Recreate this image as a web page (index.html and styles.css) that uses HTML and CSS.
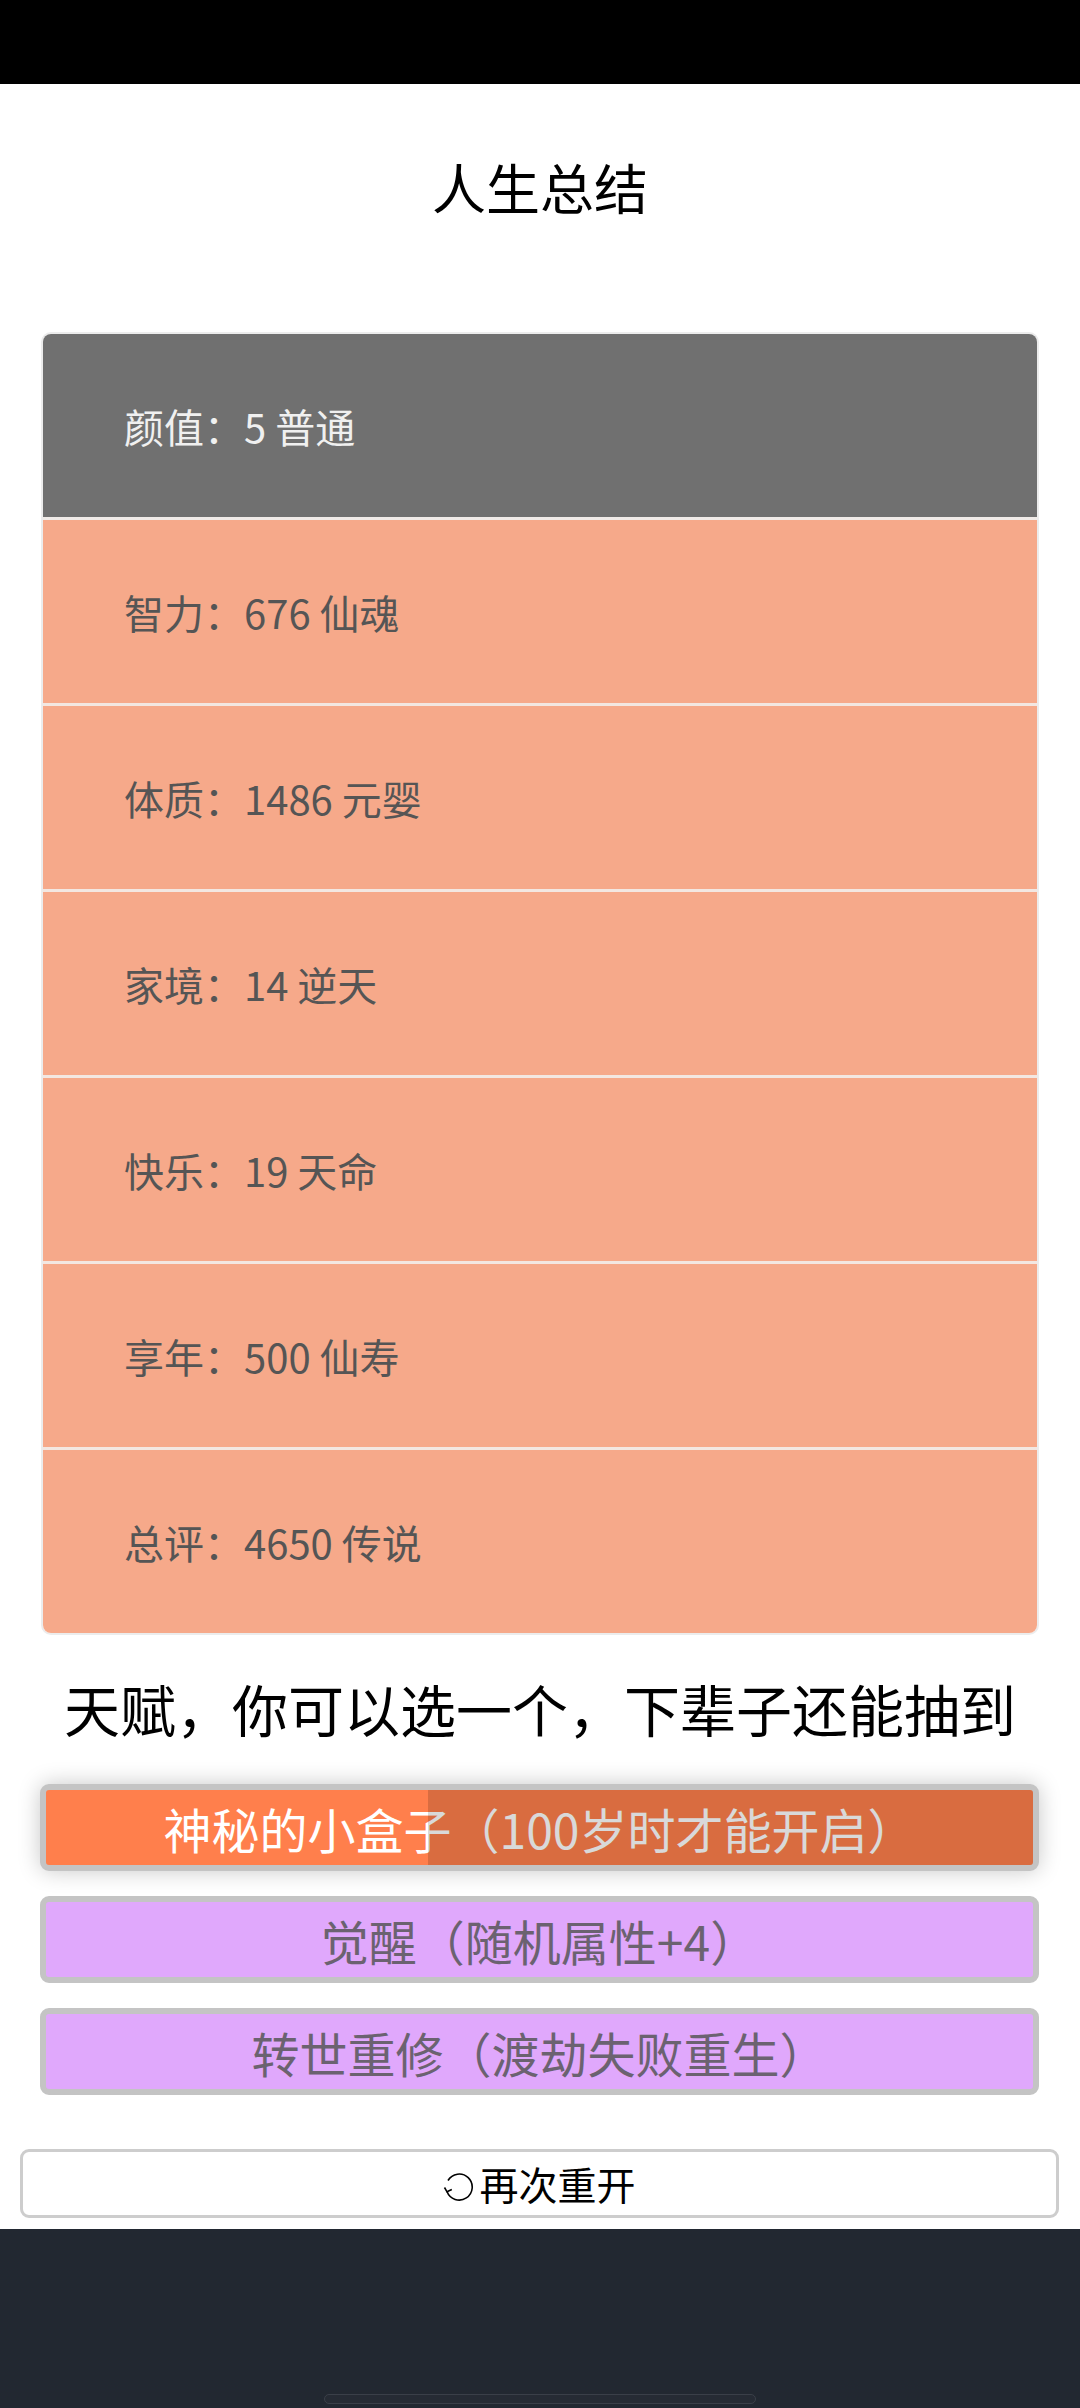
FILE: index.html
```html
<!DOCTYPE html>
<html lang="zh">
<head>
<meta charset="utf-8">
<title>人生总结</title>
<link rel="stylesheet" href="styles.css">
</head>
<body>
<div class="statusbar"></div>
<main class="page">
  <h1 class="title">人生总结</h1>
  <ul class="summary">
    <li class="row row-grey">颜值：5 普通</li>
    <li class="row">智力：676 仙魂</li>
    <li class="row">体质：1486 元婴</li>
    <li class="row">家境：14 逆天</li>
    <li class="row">快乐：19 天命</li>
    <li class="row">享年：500 仙寿</li>
    <li class="row">总评：4650 传说</li>
  </ul>
  <h2 class="subtitle">天赋，你可以选一个，下辈子还能抽到</h2>
  <div class="talents">
    <button class="talent talent-orange">神秘的小盒子（100岁时才能开启）</button>
    <button class="talent talent-purple">觉醒（随机属性+4）</button>
    <button class="talent talent-purple">转世重修（渡劫失败重生）</button>
  </div>
  <button class="restart"><svg class="restart-icon" width="32" height="30" viewBox="0 0 32 30"><path d="M5 8.5 A13 13 0 1 1 4 19.5" fill="none" stroke="#000" stroke-width="1.6"/><polyline points="1.5,15.5 4,19.8 8.8,17.6" fill="none" stroke="#000" stroke-width="1.6"/></svg>再次重开</button>
</main>
<footer class="navbar"><div class="home-indicator"></div></footer>
</body>
</html>
```

FILE: styles.css
```css
* { box-sizing: border-box; }
html, body { margin: 0; padding: 0; }
body {
  width: 1080px;
  height: 2408px;
  display: flex;
  flex-direction: column;
  background: #fff;
  font-family: "Noto Sans CJK SC", "Noto Sans", sans-serif;
}
.statusbar { height: 84px; background: #000; flex: none; }
.page {
  flex: none;
  height: 2145px;
  display: flex;
  flex-direction: column;
  align-items: stretch;
  padding-top: 70px;
}
.title {
  margin: 0;
  height: 66px;
  line-height: 66px;
  font-size: 54px;
  font-weight: 400;
  text-align: center;
  color: #000;
}
.summary {
  list-style: none;
  margin: 112px 41px 0 41px;
  padding: 0;
  border: 2px solid #ececec;
  border-radius: 10px;
  overflow: hidden;
}
.row {
  height: 186px;
  display: flex;
  align-items: center;
  padding-left: 81px;
  background: #f6a98a;
  color: #555;
  font-size: 40px;
  border-bottom: 3px solid #f3e7e1;
}
.row:last-child { border-bottom: none; height: 183px; }
.row-grey { background: #707070; color: #f0f0f0; border-bottom-color: #f0ebe8; }
.subtitle {
  margin: 40px 0 0 0;
  height: 66px;
  line-height: 66px;
  font-size: 56px;
  font-weight: 400;
  text-align: center;
  color: #000;
}
.talents {
  margin: 43px 41px 0 40px;
  display: flex;
  flex-direction: column;
  gap: 25px;
}
.talent {
  position: relative;
  height: 87px;
  border: 6px solid #c4c4c4;
  border-radius: 9px;
  font-family: inherit;
  font-size: 48px;
  line-height: 1;
  padding: 0;
  text-align: center;
  overflow: hidden;
}
.talent-orange {
  background: #ff7f4c;
  color: #fff;
  box-shadow: 0 0 22px rgba(0,0,0,0.22);
}
.talent-orange::after {
  content: "";
  position: absolute;
  top: 0;
  bottom: 0;
  left: 382px;
  right: 0;
  background: rgba(0,0,0,0.15);
}
.talent-purple {
  background: #e0a8fc;
  color: #6b6270;
}
.restart {
  margin: 54px 21px 0 20px;
  height: 69px;
  border: 3px solid #cdcdcd;
  border-radius: 9px;
  background: #fff;
  color: #000;
  font-family: inherit;
  font-size: 39px;
  line-height: 1;
  display: flex;
  align-items: center;
  justify-content: center;
  padding: 0;
}
.restart-icon { margin-right: 4px; margin-top: 6px; }
.navbar {
  flex: 1;
  background: #222831;
  display: flex;
  align-items: flex-end;
  justify-content: center;
  padding-bottom: 4px;
}
.home-indicator {
  width: 432px;
  height: 10px;
  border-radius: 5px;
  background: #262b34;
  border: 1px solid #3a3f48;
}
```
